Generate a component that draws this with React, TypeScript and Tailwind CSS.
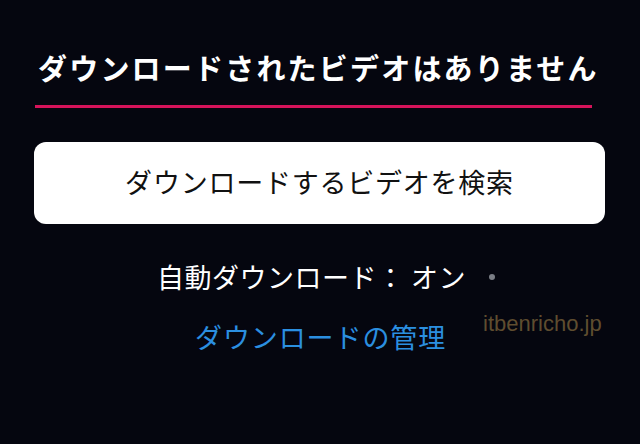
import React from "react";

export default function App() {
  const jp = { fontFamily: '"Noto Sans CJK JP", "Noto Sans", sans-serif' };
  return (
    <div
      className="relative w-[640px] h-[444px] bg-[#05060f] overflow-hidden flex flex-col"
      style={jp}
    >
      <div className="pt-[45px] pl-[38px] text-[29px] leading-[44px] font-bold text-white tracking-[2.2px] whitespace-nowrap">
        ダウンロードされたビデオはありません
      </div>
      <div className="mt-[16px] ml-[35px] w-[557px] h-[3px] bg-[#d6135a]" />
      <div className="mt-[34px] ml-[34px] w-[571px] h-[82px] rounded-[12px] bg-white flex items-center justify-center text-[27px] tracking-[0.77px] text-[#111] pb-[2px]">
        ダウンロードするビデオを検索
      </div>
      <div className="mt-[35px] flex items-center pl-[157px] text-[27px] leading-[36px] tracking-[0.5px] text-white whitespace-nowrap">
        <span>自動ダウンロード： オン</span>
        <span className="ml-[23px] w-[6px] h-[6px] rounded-full bg-[#7a7d85]" />
      </div>
      <div className="mt-[24px] pl-[195px] text-[27px] leading-[36px] tracking-[0.9px] text-[#2b8fe0] whitespace-nowrap">
        ダウンロードの管理
      </div>
      <div
        className="absolute left-[483px] top-[307px] text-[22px] text-[#5f4d2f]"
        style={{ fontFamily: '"Liberation Sans", Arial, sans-serif' }}
      >
        itbenricho.jp
      </div>
    </div>
  );
}
